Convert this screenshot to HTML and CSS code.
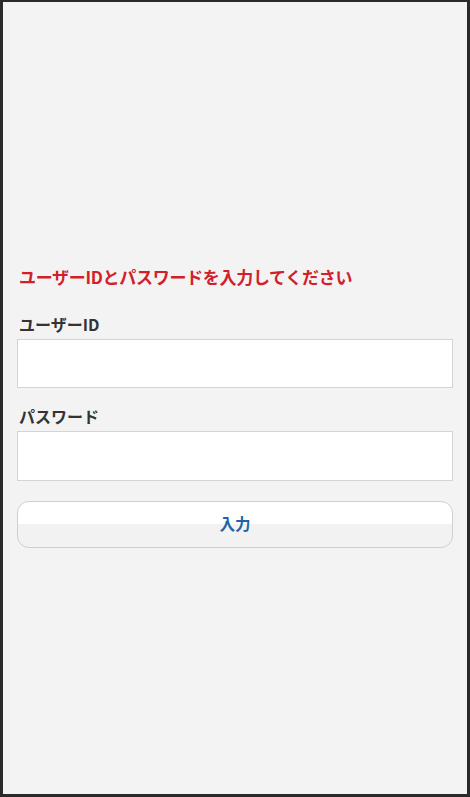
FILE: index.html
```html
<!DOCTYPE html>
<html lang="ja">
<head>
<meta charset="utf-8">
<link rel="stylesheet" href="styles.css">
</head>
<body>
<div class="frame">
  <form class="login">
    <p class="error">ユーザーIDとパスワードを入力してください</p>
    <label class="label" for="uid">ユーザーID</label>
    <input class="field field-first" id="uid" type="text">
    <label class="label label-second" for="pw">パスワード</label>
    <input class="field" id="pw" type="password">
    <button class="submit" type="button">入力</button>
  </form>
</div>
</body>
</html>
```
FILE: styles.css
```css
html, body {
  margin: 0;
  padding: 0;
}
body {
  width: 470px;
  height: 797px;
  font-family: "Noto Sans CJK JP", "Noto Sans", sans-serif;
}
.frame {
  box-sizing: border-box;
  width: 470px;
  height: 797px;
  background: #f3f3f3;
  border-style: solid;
  border-color: #2a2a2a;
  border-width: 2px 3px 3px 3px;
  padding: 263px 15px 0 14px;
}
.login {
  display: flex;
  flex-direction: column;
}
.error {
  margin: 0 0 0 2px;
  color: #d2202a;
  font-size: 17px;
  font-weight: bold;
  line-height: 24px;
  letter-spacing: -0.3px;
}
.label {
  margin: 24px 0 0 2px;
  color: #333;
  font-size: 16px;
  font-weight: bold;
  line-height: 22px;
}
.label-second {
  margin-top: 17px;
}
.field {
  box-sizing: border-box;
  margin: 4px 0 0 0;
  width: 436px;
  height: 50px;
  background: #fff;
  border: 1px solid #d4d4d4;
  border-radius: 0;
  outline: none;
  padding: 0 8px;
}
.field-first {
  height: 49px;
}
.submit {
  box-sizing: border-box;
  margin-top: 20px;
  width: 436px;
  height: 47px;
  border: 1px solid #cfcfcf;
  border-radius: 12px;
  background: linear-gradient(#ffffff 0%, #ffffff 50%, #f2f2f2 50%, #f2f2f2 100%);
  color: #1d63a6;
  font-family: "Noto Sans CJK JP", "Noto Sans", sans-serif;
  font-size: 15.5px;
  font-weight: bold;
  padding: 0 0 4px 0;
}
```
